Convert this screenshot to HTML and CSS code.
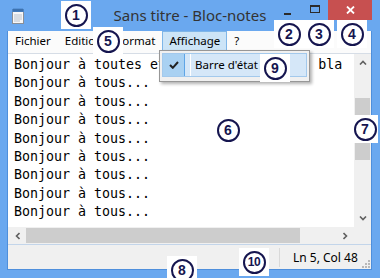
FILE: index.html
```html
<!DOCTYPE html>
<html lang="fr">
<head>
    <meta charset="UTF-8">
    <meta name="viewport" content="width=device-width, initial-scale=1.0">
    <title>Sans titre - Bloc-notes</title>
    <link rel="stylesheet" href="styles.css">
</head>
<body>
    <div class="window">
        <!-- barre de titre -->
        <div class="titlebar">
            <svg class="app-icon" width="14" height="16" viewBox="0 0 14 16">
                <rect x="1.5" y="2.5" width="11" height="13" fill="#f7f7f7" stroke="#8a8f96"/>
                <rect x="1" y="1" width="12" height="3" fill="#4d86c6"/>
                <path d="M3 0.5v3M5 0.5v3M7 0.5v3M9 0.5v3M11 0.5v3" stroke="#2f5e98" stroke-width="1"/>
                <path d="M3 7h8M3 9h8M3 11h8M3 13h6" stroke="#b9c3cf" stroke-width="1"/>
            </svg>
            <div class="title">Sans titre - Bloc-notes</div>
            <div class="controls">
                <span class="ctl ctl-min"><i></i></span>
                <span class="ctl ctl-max"><i></i></span>
                <span class="ctl ctl-close">
                    <svg width="9" height="8" viewBox="0 0 9 8"><path d="M1 0.5l7 7M8 0.5l-7 7" stroke="#fff" stroke-width="1.8"/></svg>
                </span>
            </div>
        </div>

        <div class="client">
            <div class="menubar">
                <span class="menu-item">Fichier</span>
                <span class="menu-item">Edition</span>
                <span class="menu-item">Format</span>
                <span class="menu-item active">Affichage</span>
                <span class="menu-item">?</span>
            </div>

            <div class="body">
                <div class="editor">
<pre class="text">Bonjour à toutes et à tous... bla bla bla
Bonjour à tous...
Bonjour à tous...
Bonjour à tous...
Bonjour à tous...
Bonjour à tous...
Bonjour à tous...
Bonjour à tous...
Bonjour à tous...</pre>
                </div>
                <div class="vscroll">
                    <span class="sb-btn">
                        <svg width="8" height="5" viewBox="0 0 8 5"><path d="M1 4.5l3-3 3 3" fill="none" stroke="#606060" stroke-width="1.6"/></svg>
                    </span>
                    <div class="v-track"><div class="v-thumb"></div></div>
                    <span class="sb-btn">
                        <svg width="8" height="5" viewBox="0 0 8 5"><path d="M1 0.5l3 3 3-3" fill="none" stroke="#606060" stroke-width="1.6"/></svg>
                    </span>
                </div>
            </div>

            <div class="hscroll-row">
                <div class="hscroll">
                    <span class="sb-btn sb-left">
                        <svg width="5" height="8" viewBox="0 0 5 8"><path d="M4.5 1l-3 3 3 3" fill="none" stroke="#606060" stroke-width="1.6"/></svg>
                    </span>
                    <div class="h-thumb"></div>
                    <div class="h-track"></div>
                    <span class="sb-btn sb-right">
                        <svg width="5" height="8" viewBox="0 0 5 8"><path d="M0.5 1l3 3-3 3" fill="none" stroke="#606060" stroke-width="1.6"/></svg>
                    </span>
                </div>
                <div class="corner"></div>
            </div>

            <div class="statusbar">
                <div class="status-cell">Ln 5, Col 48</div>
                <svg class="grip" width="9" height="9" viewBox="0 0 9 9">
                    <rect x="7" y="1" width="2" height="2" fill="#b8b8b8"/>
                    <rect x="4" y="4" width="2" height="2" fill="#b8b8b8"/>
                    <rect x="7" y="4" width="2" height="2" fill="#b8b8b8"/>
                    <rect x="1" y="7" width="2" height="2" fill="#b8b8b8"/>
                    <rect x="4" y="7" width="2" height="2" fill="#b8b8b8"/>
                    <rect x="7" y="7" width="2" height="2" fill="#b8b8b8"/>
                </svg>
            </div>
        </div>

        <!-- menu Affichage ouvert -->
        <div class="popup">
            <div class="popup-item">
                <span class="check">
                    <svg width="10" height="8" viewBox="0 0 10 8"><path d="M1 4l2.8 2.8L9 1" fill="none" stroke="#222" stroke-width="2"/></svg>
                </span>
                <span class="popup-label">Barre d'état</span>
            </div>
        </div>

        <!-- repères numérotés -->
        <span class="badge b1"><b>1</b></span>
        <span class="badge b2"><b>2</b></span>
        <span class="badge b3"><b>3</b></span>
        <span class="badge b4"><b>4</b></span>
        <span class="badge b5"><b>5</b></span>
        <span class="badge b6"><b>6</b></span>
        <span class="badge b7"><b>7</b></span>
        <span class="badge b8"><b>8</b></span>
        <span class="badge b9"><b>9</b></span>
        <span class="badge b10"><b>10</b></span>
    </div>
</body>
</html>
```

FILE: styles.css
```css
body {
    margin: 0;
    background-color: #6aa8ef;
    font-family: "Noto Sans", "Liberation Sans", sans-serif;
}

.window {
    position: relative;
    width: 380px;
    height: 278px;
    display: flex;
    flex-direction: column;
    overflow: hidden;
}

/* barre de titre */
.titlebar {
    height: 31px;
    flex: none;
    display: grid;
    grid-template-columns: 1fr auto 1fr;
    align-items: start;
}
.app-icon {
    margin: 8px 0 0 11px;
}
.title {
    font-size: 15px;
    line-height: 30px;
    color: #333;
}
.controls {
    justify-self: end;
    display: flex;
    margin-right: 8px;
}
.ctl {
    height: 20px;
    width: 27px;
    display: flex;
    align-items: center;
    justify-content: center;
}
.ctl-min i {
    width: 7px;
    height: 2px;
    background: #2b2b2b;
    margin-top: 7px;
}
.ctl-max i {
    width: 10px;
    height: 8px;
    box-sizing: border-box;
    border: 1px solid #2b2b2b;
    border-top-width: 2px;
    margin-top: -3px;
}
.ctl-close {
    width: 44px;
    background: #c75050;
}

/* zone client */
.client {
    flex: 1;
    min-height: 0;
    margin: 0 8px 8px 7px;
    border: 1px solid #4e8fdc;
    border-top: 0;
    background: #fff;
    display: flex;
    flex-direction: column;
}

.menubar {
    height: 22px;
    flex: none;
    display: flex;
    align-items: flex-start;
    background: #fbfbfb;
    border-bottom: 1px solid #d6dde6;
    font-size: 11.5px;
}
.menu-item {
    padding: 0 6px;
    line-height: 18px;
    border: 1px solid transparent;
    color: #000;
}
.menu-item.active {
    background: #cce4f7;
    border-color: #7fb6e8;
}

.body {
    flex: 1;
    display: flex;
    min-height: 0;
}
.editor {
    flex: 1;
    overflow: hidden;
    padding: 2px 0 0 6px;
}
.text {
    margin: 0;
    font-family: "DejaVu Sans Mono", "Liberation Mono", monospace;
    font-size: 13.3px;
    line-height: 18.4px;
    color: #000;
    white-space: pre;
}

/* barres de défilement */
.vscroll {
    width: 17px;
    background: #f0f0f0;
    display: flex;
    flex-direction: column;
}
.sb-btn {
    height: 17px;
    width: 17px;
    display: flex;
    align-items: center;
    justify-content: center;
    flex-shrink: 0;
}
.v-track {
    flex: 1;
}
.v-thumb {
    margin: 27px 1px 0 1px;
    height: 62px;
    background: #cdcdcd;
}

.hscroll-row {
    height: 17px;
    flex: none;
    display: flex;
}
.hscroll {
    flex: 1;
    display: flex;
    background: #f0f0f0;
}
.sb-left {
    width: 18px;
}
.h-thumb {
    width: 274px;
    margin: 1px 0;
    background: #cdcdcd;
}
.h-track {
    flex: 1;
}
.corner {
    width: 17px;
    background: #f0f0f0;
}

.statusbar {
    height: 24px;
    flex: none;
    display: flex;
    justify-content: flex-end;
    align-items: stretch;
    background: #f0f0f0;
    border-top: 1px solid #c3d5ea;
    font-size: 12px;
}
.status-cell {
    width: 68px;
    margin: 3px 0 2px;
    padding-left: 13px;
    border-left: 1px solid #d9d9d9;
    display: flex;
    align-items: center;
    color: #000;
    white-space: nowrap;
}
.grip {
    align-self: flex-end;
    margin: 0 1px 1px 0;
}

/* menu déroulant */
.popup {
    position: absolute;
    left: 159px;
    top: 50px;
    width: 145px;
    height: 26px;
    background: #f0f0f0;
    border: 1px solid #979797;
    box-shadow: 2px 2px 3px rgba(0, 0, 0, 0.3);
    padding: 2px;
}
.popup-item {
    height: 24px;
    display: flex;
    align-items: stretch;
    background: #d5e7f8;
    border: 1px solid #a3c9ec;
    box-sizing: border-box;
    font-size: 11.5px;
}
.check {
    width: 21px;
    display: flex;
    align-items: center;
    justify-content: center;
    background: #a9d1f2;
    border-right: 1px solid #5fa5e6;
}
.popup-label {
    margin-left: 5px;
    padding-left: 4px;
    border-left: 1px solid #fff;
    line-height: 22px;
}

/* repères numérotés */
.badge {
    position: absolute;
    width: 30px;
    height: 28px;
    background: #fff;
    display: flex;
    align-items: center;
    justify-content: center;
}
.badge b {
    width: 23px;
    height: 23px;
    box-sizing: border-box;
    border: 2.5px solid #15154f;
    border-radius: 50%;
    color: #15154f;
    font-family: "Liberation Sans", sans-serif;
    font-size: 14px;
    display: flex;
    align-items: center;
    justify-content: center;
}
.b1 { left: 61px; top: 1px; }
.b2 { left: 274px; top: 20px; }
.b3 { left: 304px; top: 20px; }
.b4 { left: 337px; top: 20px; }
.b5 { left: 93px; top: 27px; }
.b6 { left: 213px; top: 116px; }
.b7 { left: 352px; top: 115px; width: 26px; }
.b8 { left: 167px; top: 256px; }
.b9 { left: 260px; top: 54px; }
.b10 { left: 239px; top: 248px; }
.b10 b { font-size: 12px; letter-spacing: -0.5px; }
```
